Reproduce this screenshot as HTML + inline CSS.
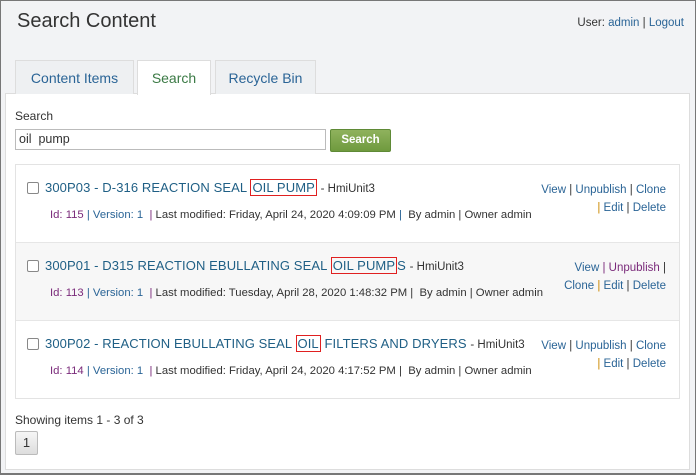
<!DOCTYPE html>
<html><head><style>
*{margin:0;padding:0;box-sizing:border-box}
body{width:696px;height:475px;background:#f2f3f5;font-family:"Liberation Sans",sans-serif;font-size:12px;color:#333;position:relative;overflow:hidden;border:1px solid #777;border-bottom:2px solid #777}
.a{position:absolute;white-space:nowrap}
h1{position:absolute;left:16px;top:9px;font-size:20px;font-weight:normal;color:#333}
.tab{position:absolute;top:59px;height:34px;border:1px solid #ddd;border-bottom:none;background:#eef0f2;color:#2a6496;font-size:14px;text-align:center;line-height:34px}
.panel{position:absolute;left:4px;top:92px;width:685px;height:377px;background:#fff;border:1px solid #ddd}
.l{color:#2a6496}
.box{position:absolute;left:14px;top:163px;width:665px;height:235px;border:1px solid #e3e3e3}
.row{position:absolute;left:0;width:663px;height:78px;border-bottom:1px solid #e6e6e6}
.cb{position:absolute;left:11px;top:17px;width:12px;height:12px;border:1px solid #888;border-radius:2px;background:#fff}
.t{position:absolute;left:29px;top:15px;font-size:13px;color:#1f5f85;letter-spacing:0.1px;white-space:nowrap}
.hl{border:1px solid #e02020;padding:0 1px}
.t .s{color:#333;letter-spacing:0;font-size:11.5px}
.m{position:absolute;left:34px;top:44px;font-size:11.3px;white-space:nowrap;color:#333}
.p{color:#7a2a7a}
.r{position:absolute;right:13px;top:16px;text-align:right;line-height:18px;color:#333;font-size:11.5px}
</style></head><body>
<h1>Search Content</h1>
<div class="a" style="right:11px;top:16px;font-size:11.5px">User: <span class="l">admin</span> | <span class="l">Logout</span></div>
<div class="panel"></div>
<div class="tab" style="left:14px;width:119px">Content Items</div>
<div class="tab" style="left:136px;width:74px;background:#fff;height:35px;color:#3b7a45">Search</div>
<div class="tab" style="left:214px;width:101px">Recycle Bin</div>
<div class="a" style="left:14px;top:108px">Search</div>
<div class="a" style="left:14px;top:128px;width:311px;height:21px;border:1px solid #bbb;padding:2px 3px;font-size:12.5px">oil&nbsp; pump</div>
<div class="a" style="left:329px;top:128px;width:61px;height:23px;border:1px solid #5f8a36;border-radius:2px;background:linear-gradient(#8fb25d,#6f9a3e);color:#fff;font-weight:bold;text-align:center;line-height:21px;font-size:11.5px">Search</div>
<div class="box">
<div class="row" style="top:0">
<div class="cb"></div>
<div class="t">300P03 - D-316 REACTION SEAL <span class="hl">OIL PUMP</span> <span class="s">- HmiUnit3</span></div>
<div class="m"><span class="p">Id: 115</span> <span class="l">| Version: 1</span> &nbsp;<span class="p">|</span> Last modified: Friday, April 24, 2020 4:09:09 PM <span class="l">|</span>&nbsp; By admin | Owner admin</div>
<div class="r"><span class="l">View</span> | <span class="l">Unpublish</span> | <span class="l">Clone</span><br><span style="color:#c80">|</span> <span class="l">Edit</span> | <span class="l">Delete</span></div>
</div>
<div class="row" style="top:78px;background:#f7f7f7">
<div class="cb"></div>
<div class="t">300P01 - D315 REACTION EBULLATING SEAL <span class="hl">OIL PUMP</span>S <span class="s">- HmiUnit3</span></div>
<div class="m"><span class="p">Id: 113</span> <span class="l">| Version: 1</span> &nbsp;<span class="p">|</span> Last modified: Tuesday, April 28, 2020 1:48:32 PM |&nbsp; By admin | Owner admin</div>
<div class="r"><span class="l">View</span> <span class="p">|</span> <span class="p">Unpublish</span> |<br><span class="l">Clone</span> <span style="color:#c80">|</span> <span class="l">Edit</span> | <span class="l">Delete</span></div>
</div>
<div class="row" style="top:156px;border-bottom:none">
<div class="cb"></div>
<div class="t">300P02 - REACTION EBULLATING SEAL <span class="hl">OIL</span> FILTERS AND DRYERS <span class="s">- HmiUnit3</span></div>
<div class="m"><span class="p">Id: 114</span> <span class="l">| Version: 1</span> &nbsp;<span class="p">|</span> Last modified: Friday, April 24, 2020 4:17:52 PM |&nbsp; By admin | Owner admin</div>
<div class="r"><span class="l">View</span> | <span class="l">Unpublish</span> | <span class="l">Clone</span><br><span style="color:#c80">|</span> <span class="l">Edit</span> | <span class="l">Delete</span></div>
</div>
</div>
<div class="a" style="left:14px;top:412px">Showing items 1 - 3 of 3</div>
<div class="a" style="left:14px;top:430px;width:23px;height:24px;border:1px solid #bbb;border-radius:2px;background:linear-gradient(#f6f6f6,#ddd);text-align:center;line-height:22px;font-size:13px">1</div>
</body></html>
